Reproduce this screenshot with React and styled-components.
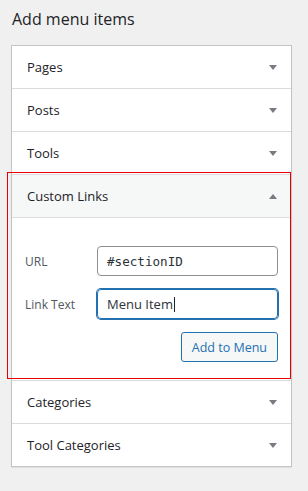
import React from 'react'
import styled, { createGlobalStyle } from 'styled-components'

const GlobalStyle = createGlobalStyle`
    html, body {
        margin: 0;
        padding: 0;
        background: #f0f0f1;
    }
    body {
        font-family: 'Open Sans', 'Noto Sans', sans-serif;
        color: #1d2327;
    }
`

const sections = [
    { title: 'Pages' },
    { title: 'Posts' },
    { title: 'Tools' },
    { title: 'Custom Links', open: true },
    { title: 'Categories' },
    { title: 'Tool Categories' },
]

function App() {
    return (
        <Page>
            <GlobalStyle />
            <Title>Add menu items</Title>
            <Panel>
                {sections.map((s) =>
                    s.open ? (
                        <Section key={s.title} $highlight>
                            <Header $open>
                                <span>{s.title}</span>
                                <Arrow $up />
                            </Header>
                            <Body>
                                <FieldRow>
                                    <Label>URL</Label>
                                    <Field $mono>#sectionID</Field>
                                </FieldRow>
                                <FieldRow>
                                    <Label>Link Text</Label>
                                    <Field $focused>
                                        Menu Item
                                        <Caret />
                                    </Field>
                                </FieldRow>
                                <Actions>
                                    <Button>Add to Menu</Button>
                                </Actions>
                            </Body>
                        </Section>
                    ) : (
                        <Section key={s.title}>
                            <Header>
                                <span>{s.title}</span>
                                <Arrow />
                            </Header>
                        </Section>
                    )
                )}
            </Panel>
        </Page>
    )
}

export default App

const Page = styled.div`
    padding: 7px 16px 24px 11px;
`

const Title = styled.h2`
    margin: 0 0 14px 1px;
    font-size: 16px;
    line-height: 24px;
    font-weight: 400;
    color: #1d2327;
`

const Panel = styled.div`
    background: #fff;
    border: 1px solid #c3c4c7;
    box-shadow: 0 1px 1px rgba(0, 0, 0, 0.06);
`

const Section = styled.div`
    position: relative;
    border-bottom: 1px solid #dcdcde;
    &:last-child {
        border-bottom: none;
    }
    ${(p) =>
        p.$highlight &&
        `
        &::after {
            content: '';
            position: absolute;
            top: -3px;
            left: -5px;
            right: 0;
            bottom: 1px;
            border: 1px solid #e80000;
            pointer-events: none;
        }
    `}
`

const Header = styled.div`
    height: 42px;
    display: flex;
    align-items: center;
    justify-content: space-between;
    padding: 0 14px 0 15px;
    font-size: 13px;
    color: #1d2327;
    background: ${(p) => (p.$open ? '#f6f7f7' : '#fff')};
    border-bottom: ${(p) => (p.$open ? '1px solid #dcdcde' : 'none')};
`

const Arrow = styled.i`
    width: 0;
    height: 0;
    border-left: 4px solid transparent;
    border-right: 4px solid transparent;
    ${(p) =>
        p.$up
            ? 'border-bottom: 5px solid #787c82;'
            : 'border-top: 5px solid #787c82;'}
`

const Body = styled.div`
    height: 162px;
    box-sizing: border-box;
    padding: 28px 13px 18px 13px;
    display: flex;
    flex-direction: column;
    gap: 13px;
`

const FieldRow = styled.div`
    display: flex;
    align-items: center;
`

const Label = styled.div`
    width: 72px;
    font-size: 12px;
    color: #50575e;
`

const Field = styled.div`
    flex: 1;
    height: 30px;
    box-sizing: border-box;
    display: flex;
    align-items: center;
    padding: 0 9px;
    border-radius: 4px;
    border: 1px solid ${(p) => (p.$focused ? '#2271b1' : '#8c8f94')};
    box-shadow: ${(p) => (p.$focused ? '0 0 0 1px #2271b1' : 'none')};
    color: #2c3338;
    font-family: ${(p) =>
        p.$mono ? "'DejaVu Sans Mono', 'Liberation Mono', monospace" : "'Open Sans', sans-serif"};
    font-size: ${(p) => (p.$mono ? '12.6px' : '13px')};
`

const Caret = styled.span`
    display: inline-block;
    width: 1px;
    height: 15px;
    margin-left: 1px;
    background: #1d2327;
`

const Actions = styled.div`
    display: flex;
    justify-content: flex-end;
`

const Button = styled.button`
    height: 30px;
    padding: 0 10px;
    border: 1px solid #2271b1;
    border-radius: 3px;
    background: #f6f7f7;
    color: #2271b1;
    font-family: 'Open Sans', sans-serif;
    font-size: 12.5px;
    cursor: pointer;
`
